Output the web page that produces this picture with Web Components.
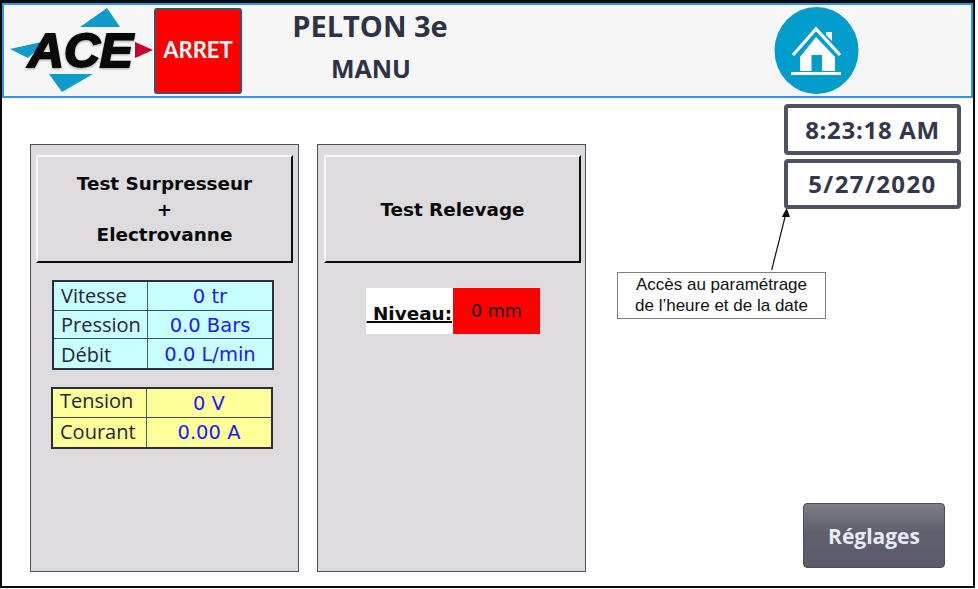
<!DOCTYPE html>
<html lang="fr"><head><meta charset="utf-8"><title>PELTON 3e</title>
<style>
html,body{margin:0;padding:0;background:#fff;}
body{font-family:"Open Sans","DejaVu Sans",sans-serif;}
</style></head><body>
<hmi-app>
  <hmi-header slot="header" title-a="PELTON 3e" title-b="MANU"></hmi-header>
  <hmi-panel slot="panels">
    <test-button slot="action">Test Surpresseur<br>+<br>Electrovanne</test-button>
    <data-table tone="cyan" style="margin:17px 0 0 16px;--row-h:28.67px;--v-pad:2px">
      <data-row label="Vitesse" value="0 tr" style="--l-pad:0"></data-row>
      <data-row label="Pression" value="0.0 Bars" style="--l-pad:2px"></data-row>
      <data-row label="Débit" value="0.0 L/min" style="--l-pad:2px"></data-row>
    </data-table>
    <data-table tone="yellow" style="margin:17px 0 0 15px;--row-h:29px;--v-pad:1px">
      <data-row label="Tension" value="0 V" style="--l-pad:0;--l-mar:-3px"></data-row>
      <data-row label="Courant" value="0.00 A"></data-row>
    </data-table>
  </hmi-panel>
  <hmi-panel slot="panels">
    <test-button slot="action" style="margin:0 -1px 0 1px">Test Relevage</test-button>
    <level-readout label="Niveau:" value="0 mm"></level-readout>
  </hmi-panel>
  <clock-box slot="side" style="height:51px">8:23:18 AM</clock-box>
  <clock-box slot="side" style="letter-spacing:1.4px;padding-bottom:2px">5/27/2020</clock-box>
  <settings-button slot="side">Réglages</settings-button>
  <note-callout slot="overlay">Accès au paramétrage<br>de l’heure et de la date</note-callout>
</hmi-app>
<script>
function def(name, css, html){
  customElements.define(name, class extends HTMLElement{
    connectedCallback(){
      if(this.shadowRoot) return;
      const r=this.attachShadow({mode:'open'});
      r.innerHTML='<style>'+css+'</style>'+(typeof html==='function'?html(this):html);
    }
  });
}
const FONT='"Open Sans","DejaVu Sans",sans-serif';
def('hmi-app',`
:host{display:block;box-sizing:border-box;width:975px;height:588px;border:2px solid #0b0b0b;border-top-width:3px;position:relative;background:#fff;font-family:${FONT};overflow:hidden}
.main{display:flex;height:489px;box-sizing:border-box;padding:6px 12px 0 28px}
.panels{display:flex;gap:18px;padding-top:40px;height:428px}
.side{margin-left:auto;display:flex;flex-direction:column;align-items:flex-end;gap:4px;height:464px}
`,`<slot name="header"></slot><div class="main"><div class="panels"><slot name="panels"></slot></div><div class="side"><slot name="side"></slot></div></div><slot name="overlay"></slot>`);

def('hmi-header',`
:host{display:flex;box-sizing:border-box;height:95px;border:2px solid #2f95ee;background:#f6f6f6;align-items:center;color:#2f3247}
.logo{width:143px;height:87px;margin-left:6px;flex:none}
.logo text{filter:drop-shadow(0 1.5px .8px rgba(0,0,0,.35))}
.state{box-sizing:border-box;width:88px;height:86px;margin-left:1px;padding-bottom:2px;background:#f00;border:2px solid #4a4e5a;border-radius:3px;color:#fff;font:700 22px "Lato","Open Sans",sans-serif;display:flex;align-items:center;justify-content:center;flex:none}
.titles{width:216px;margin-left:2px;display:flex;flex-direction:column;align-items:center;font-weight:700;line-height:42px;margin-top:-8px;flex:none}
.t1{font-size:29px;margin-left:36px;white-space:nowrap}
.t2{font-size:25px;margin-left:38px;white-space:nowrap}
.home{width:85px;height:87px;margin-left:314px;flex:none}
`,h=>`
<svg class="logo" viewBox="0 0 143 87" aria-hidden="true">
  <polygon points="97,1 70,20 110,20" fill="#0f9bcb"/>
  <polygon points="0,42 36,34 18,51" fill="#0f9bcb"/>
  <polygon points="39,67 83,67 52,85" fill="#0f9bcb"/>
  <polygon points="125,35 143,43 125,51" fill="#c8002e"/>
  <text x="18" y="60" font-family="Liberation Sans" font-weight="700" font-style="italic" font-size="49" fill="#0a0a0a" stroke="#0a0a0a" stroke-width="2" textLength="105" lengthAdjust="spacingAndGlyphs">ACE</text>
</svg>
<div class="state">ARRET</div>
<div class="titles"><div class="t1">${h.getAttribute('title-a')}</div><div class="t2">${h.getAttribute('title-b')}</div></div>
<svg class="home" viewBox="0 0 85 87" aria-hidden="true">
  <ellipse cx="42.5" cy="43.5" rx="42" ry="43.5" fill="#009dcc"/>
  <polygon points="52,25 58,25 58,34 52,28" fill="#fff"/>
  <path d="M19 48 L42 22 L66 48" fill="none" stroke="#fff" stroke-width="3.2"/>
  <path fill-rule="evenodd" d="M42 30 L61 50 L61 64 L26 64 L26 50 Z M37.5 48 L37.5 64 L48 64 L48 48 Z" fill="#fff"/>
  <rect x="17" y="65" width="50" height="3" fill="#fff"/>
</svg>`);

def('hmi-panel',`
:host{display:block;box-sizing:border-box;width:269px;height:428px;background:#dddbde;border:1px solid #4a4e60;padding:10px 5px}
`,`<slot name="action"></slot><slot></slot>`);

def('test-button',`
:host{display:flex;box-sizing:border-box;height:108px;padding-top:1px;align-items:center;justify-content:center;text-align:center;background:#dddbde;border:2px solid;border-color:#f6f6f6 #0c0c0c #0c0c0c #f6f6f6;color:#0a0a0a;font:700 18.4px/25.5px "DejaVu Sans",sans-serif}
`,`<div><slot></slot></div>`);

def('data-table',`
:host{display:block;box-sizing:border-box;width:222px;border:2px solid #2a2d40;font:20px "Open Sans",sans-serif}
:host([tone=cyan]){background:#c8ffff}
:host([tone=yellow]){background:#ffff99}
::slotted(data-row:not(:last-child)){border-bottom:1px solid #3f4d5a}
`,`<slot></slot>`);

def('data-row',`
:host{display:grid;grid-template-columns:94px 1fr;height:var(--row-h,29px);box-sizing:border-box;align-items:center;color:#23253a}
.l{padding:var(--l-pad,0) 0 0 7px;border-right:1.5px solid #4a5a66;height:100%;display:flex;align-items:center;box-sizing:border-box;line-height:1}
.l span{margin-top:var(--l-mar,0)}
.v{text-align:center;color:#1a1aff;font:19.5px "DejaVu Sans",sans-serif;padding-top:var(--v-pad,0)}
`,h=>`<div class="l"><span>${h.getAttribute('label')}</span></div><div class="v">${h.getAttribute('value')}</div>`);

def('level-readout',`
:host{display:flex;width:174px;height:46px;margin:25px 0 0 43px;font:18px "DejaVu Sans",sans-serif;color:#0a0a0a}
.l{width:87px;background:#fff;font-weight:700;font-size:18.4px;text-decoration:underline;text-decoration-thickness:2px;display:flex;align-items:center;justify-content:flex-end;padding:4px 1px 0 0;box-sizing:border-box;white-space:pre}
.v{width:87px;background:#f00;display:flex;align-items:center;justify-content:center;font-size:17.5px}
`,h=>`<div class="l"> ${h.getAttribute('label')}</div><div class="v">${h.getAttribute('value')}</div>`);

def('clock-box',`
:host{display:flex;box-sizing:border-box;width:177px;height:50px;align-items:center;justify-content:center;border:4px solid #4f5260;border-radius:4px;background:#fff;color:#33364d;font:700 24px "Open Sans",sans-serif;letter-spacing:.7px}
`,`<slot></slot>`);

def('settings-button',`
:host{display:flex;box-sizing:border-box;width:142px;height:65px;margin-top:auto;margin-right:16px;align-items:center;justify-content:center;border:1px solid #4a4e5a;border-radius:4px;background:linear-gradient(#7d7e88,#5f5f6e 45%,#5a5a6a);color:#e4ebf2;font:700 21px "Open Sans",sans-serif}
`,`<slot></slot>`);

def('note-callout',`
:host{position:absolute;left:615px;top:269px;width:209px;height:47px;box-sizing:border-box;border:1px solid #808080;background:#fff;color:#111;font:17px/20.5px "Liberation Sans",sans-serif;text-align:center;padding-top:2px;white-space:nowrap}
svg{position:absolute;left:0;top:0;overflow:visible}
`,`<slot></slot><svg width="1" height="1" aria-hidden="true"><line x1="153.7" y1="-3" x2="167" y2="-56" stroke="#111" stroke-width="1.2"/><polygon points="168.7,-65 163.7,-56 172,-56" fill="#111"/></svg>`);
</script>
</body></html>
